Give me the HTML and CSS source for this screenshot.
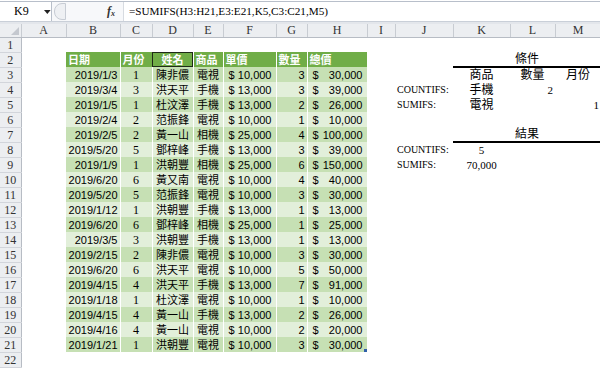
FILE: index.html
```html
<!DOCTYPE html>
<html lang="zh-Hant">
<head>
    <meta charset="UTF-8">
    <meta name="viewport" content="width=device-width, initial-scale=1.0">
    <title>SUMIFS</title>
    <link rel="stylesheet" href="styles.css">
</head>
<body>
    <div class="barra-formula">
        <div class="cuadro-nombre">
            <span class="ref">K9</span>
            <svg class="caret" width="7" height="4" viewBox="0 0 7 4"><path d="M0 0h7L3.5 4z" fill="#222"/></svg>
        </div>
        <div class="separador">
            <span class="perilla"></span>
            <span class="fx">f<sub>x</sub></span>
        </div>
        <div class="formula">=SUMIFS(H3:H21,E3:E21,K5,C3:C21,M5)</div>
    </div>
    <div class="franja"></div>

    <table class="hoja">
        <colgroup>
            <col style="width:21px"><col style="width:45px"><col style="width:54px"><col style="width:32px">
            <col style="width:41px"><col style="width:30px"><col style="width:53px"><col style="width:31px">
            <col style="width:60px"><col style="width:28px"><col style="width:58px"><col style="width:57px">
            <col style="width:45px"><col style="width:46px">
        </colgroup>
        <tr class="letras">
            <th class="esquina"></th>
            <th>A</th><th>B</th><th>C</th><th>D</th><th>E</th><th>F</th><th>G</th>
            <th>H</th><th>I</th><th>J</th><th>K</th><th>L</th><th>M</th>
        </tr>
        <tr><th class="num">1</th><td></td><td></td><td></td><td></td><td></td><td></td><td></td><td></td><td></td><td></td><td></td><td></td><td></td></tr>
        <tr class="cabecera">
            <th class="num">2</th><td></td>
            <td class="t">日期</td><td class="t">月份</td><td class="t c activa">姓名</td><td class="t">商品</td>
            <td class="t">單價</td><td class="t">數量</td><td class="t">總價</td>
            <td></td><td></td><td class="titulo" colspan="3">條件</td>
        </tr>
        <tr class="oscura">
            <th class="num">3</th><td></td>
            <td class="t r">2019/1/3</td><td class="t mes">1</td><td class="t c">陳非儂</td><td class="t c">電視</td>
            <td class="t dinero"><span class="dol">$</span>10,000</td><td class="t r">3</td><td class="t dinero"><span class="dol">$</span>30,000</td>
            <td></td><td></td><td class="cond">商品</td><td class="cond">數量</td><td class="cond">月份</td>
        </tr>
        <tr class="clara">
            <th class="num">4</th><td></td>
            <td class="t r">2019/3/4</td><td class="t mes">3</td><td class="t c">洪天平</td><td class="t c">手機</td>
            <td class="t dinero"><span class="dol">$</span>13,000</td><td class="t r">3</td><td class="t dinero"><span class="dol">$</span>39,000</td>
            <td></td><td class="lbl">COUNTIFS:</td><td class="cond">手機</td><td class="val r">2</td><td></td>
        </tr>
        <tr class="oscura">
            <th class="num">5</th><td></td>
            <td class="t r">2019/1/5</td><td class="t mes">1</td><td class="t c">杜汶澤</td><td class="t c">手機</td>
            <td class="t dinero"><span class="dol">$</span>13,000</td><td class="t r">2</td><td class="t dinero"><span class="dol">$</span>26,000</td>
            <td></td><td class="lbl">SUMIFS:</td><td class="cond">電視</td><td></td><td class="val r">1</td>
        </tr>
        <tr class="clara">
            <th class="num">6</th><td></td>
            <td class="t r">2019/2/4</td><td class="t mes">2</td><td class="t c">范振鋒</td><td class="t c">電視</td>
            <td class="t dinero"><span class="dol">$</span>10,000</td><td class="t r">1</td><td class="t dinero"><span class="dol">$</span>10,000</td>
            <td></td><td></td><td></td><td></td><td></td>
        </tr>
        <tr class="oscura">
            <th class="num">7</th><td></td>
            <td class="t r">2019/2/5</td><td class="t mes">2</td><td class="t c">黃一山</td><td class="t c">相機</td>
            <td class="t dinero"><span class="dol">$</span>25,000</td><td class="t r">4</td><td class="t dinero"><span class="dol">$</span>100,000</td>
            <td></td><td></td><td class="titulo" colspan="3">結果</td>
        </tr>
        <tr class="clara">
            <th class="num">8</th><td></td>
            <td class="t r">2019/5/20</td><td class="t mes">5</td><td class="t c">鄧梓峰</td><td class="t c">手機</td>
            <td class="t dinero"><span class="dol">$</span>13,000</td><td class="t r">3</td><td class="t dinero"><span class="dol">$</span>39,000</td>
            <td></td><td class="lbl">COUNTIFS:</td><td class="val c">5</td><td></td><td></td>
        </tr>
        <tr class="oscura">
            <th class="num">9</th><td></td>
            <td class="t r">2019/1/9</td><td class="t mes">1</td><td class="t c">洪朝豐</td><td class="t c">相機</td>
            <td class="t dinero"><span class="dol">$</span>25,000</td><td class="t r">6</td><td class="t dinero"><span class="dol">$</span>150,000</td>
            <td></td><td class="lbl">SUMIFS:</td><td class="val c">70,000</td><td></td><td></td>
        </tr>
        <tr class="clara">
            <th class="num">10</th><td></td>
            <td class="t r">2019/6/20</td><td class="t mes">6</td><td class="t c">黃又南</td><td class="t c">電視</td>
            <td class="t dinero"><span class="dol">$</span>10,000</td><td class="t r">4</td><td class="t dinero"><span class="dol">$</span>40,000</td>
            <td></td><td></td><td></td><td></td><td></td>
        </tr>
        <tr class="oscura">
            <th class="num">11</th><td></td>
            <td class="t r">2019/5/20</td><td class="t mes">5</td><td class="t c">范振鋒</td><td class="t c">電視</td>
            <td class="t dinero"><span class="dol">$</span>10,000</td><td class="t r">3</td><td class="t dinero"><span class="dol">$</span>30,000</td>
            <td></td><td></td><td></td><td></td><td></td>
        </tr>
        <tr class="clara">
            <th class="num">12</th><td></td>
            <td class="t r">2019/1/12</td><td class="t mes">1</td><td class="t c">洪朝豐</td><td class="t c">手機</td>
            <td class="t dinero"><span class="dol">$</span>13,000</td><td class="t r">1</td><td class="t dinero"><span class="dol">$</span>13,000</td>
            <td></td><td></td><td></td><td></td><td></td>
        </tr>
        <tr class="oscura">
            <th class="num">13</th><td></td>
            <td class="t r">2019/6/20</td><td class="t mes">6</td><td class="t c">鄧梓峰</td><td class="t c">相機</td>
            <td class="t dinero"><span class="dol">$</span>25,000</td><td class="t r">1</td><td class="t dinero"><span class="dol">$</span>25,000</td>
            <td></td><td></td><td></td><td></td><td></td>
        </tr>
        <tr class="clara">
            <th class="num">14</th><td></td>
            <td class="t r">2019/3/5</td><td class="t mes">3</td><td class="t c">洪朝豐</td><td class="t c">手機</td>
            <td class="t dinero"><span class="dol">$</span>13,000</td><td class="t r">1</td><td class="t dinero"><span class="dol">$</span>13,000</td>
            <td></td><td></td><td></td><td></td><td></td>
        </tr>
        <tr class="oscura">
            <th class="num">15</th><td></td>
            <td class="t r">2019/2/15</td><td class="t mes">2</td><td class="t c">陳非儂</td><td class="t c">電視</td>
            <td class="t dinero"><span class="dol">$</span>10,000</td><td class="t r">3</td><td class="t dinero"><span class="dol">$</span>30,000</td>
            <td></td><td></td><td></td><td></td><td></td>
        </tr>
        <tr class="clara">
            <th class="num">16</th><td></td>
            <td class="t r">2019/6/20</td><td class="t mes">6</td><td class="t c">洪天平</td><td class="t c">電視</td>
            <td class="t dinero"><span class="dol">$</span>10,000</td><td class="t r">5</td><td class="t dinero"><span class="dol">$</span>50,000</td>
            <td></td><td></td><td></td><td></td><td></td>
        </tr>
        <tr class="oscura">
            <th class="num">17</th><td></td>
            <td class="t r">2019/4/15</td><td class="t mes">4</td><td class="t c">洪天平</td><td class="t c">手機</td>
            <td class="t dinero"><span class="dol">$</span>13,000</td><td class="t r">7</td><td class="t dinero"><span class="dol">$</span>91,000</td>
            <td></td><td></td><td></td><td></td><td></td>
        </tr>
        <tr class="clara">
            <th class="num">18</th><td></td>
            <td class="t r">2019/1/18</td><td class="t mes">1</td><td class="t c">杜汶澤</td><td class="t c">電視</td>
            <td class="t dinero"><span class="dol">$</span>10,000</td><td class="t r">1</td><td class="t dinero"><span class="dol">$</span>10,000</td>
            <td></td><td></td><td></td><td></td><td></td>
        </tr>
        <tr class="oscura">
            <th class="num">19</th><td></td>
            <td class="t r">2019/4/15</td><td class="t mes">4</td><td class="t c">黃一山</td><td class="t c">手機</td>
            <td class="t dinero"><span class="dol">$</span>13,000</td><td class="t r">2</td><td class="t dinero"><span class="dol">$</span>26,000</td>
            <td></td><td></td><td></td><td></td><td></td>
        </tr>
        <tr class="clara">
            <th class="num">20</th><td></td>
            <td class="t r">2019/4/16</td><td class="t mes">4</td><td class="t c">黃一山</td><td class="t c">電視</td>
            <td class="t dinero"><span class="dol">$</span>10,000</td><td class="t r">2</td><td class="t dinero"><span class="dol">$</span>20,000</td>
            <td></td><td></td><td></td><td></td><td></td>
        </tr>
        <tr class="oscura">
            <th class="num">21</th><td></td>
            <td class="t r">2019/1/21</td><td class="t mes">1</td><td class="t c">洪朝豐</td><td class="t c">電視</td>
            <td class="t dinero"><span class="dol">$</span>10,000</td><td class="t r">3</td><td class="t dinero ultima"><span class="dol">$</span>30,000</td>
            <td></td><td></td><td></td><td></td><td></td>
        </tr>
        <tr><th class="num">22</th><td></td><td></td><td></td><td></td><td></td><td></td><td></td><td></td><td></td><td></td><td></td><td></td><td></td></tr>
    </table>
</body>
</html>
```

FILE: styles.css
```css
/* ---------------- pagina ---------------- */
body {
    margin: 0;
    width: 600px;
    height: 370px;
    overflow: hidden;
    background-color: #fff;
    font-family: "Liberation Serif", "Noto Sans CJK TC", serif;
    color: #000;
}

/* ---------------- barra de formulas ---------------- */
.barra-formula {
    display: flex;
    height: 19px;
    margin-top: 1px;
    border-top: 1px solid #b8bfca;
    border-bottom: 1px solid #c9cfd8;
    background-color: #fff;
}

.cuadro-nombre {
    display: flex;
    align-items: center;
    width: 51px;
    border-right: 1px solid #b8bfca;
    font-size: 12px;
}

.cuadro-nombre .ref {
    margin-left: 14px;
    width: 30px;
}

.caret {
    margin-left: 2px;
}

.separador {
    display: flex;
    align-items: center;
    width: 71px;
    background-color: #f7f8fa;
    border-right: 1px solid #d7dbe1;
}

.perilla {
    width: 10px;
    height: 15px;
    margin-left: 2px;
    border: 1px solid #c7ccd4;
    border-radius: 8px 0 0 8px;
    background-color: #eef0f3;
}

.fx {
    margin-left: auto;
    margin-right: 8px;
    font-style: italic;
    font-weight: bold;
    font-size: 12px;
    color: #333;
}

.fx sub {
    font-size: 8px;
    vertical-align: -1px;
}

.formula {
    padding-left: 5px;
    font-size: 11.2px;
    line-height: 19px;
}

.franja {
    height: 2px;
    background-color: #e3e6eb;
}

/* ---------------- hoja ---------------- */
.hoja {
    border-collapse: collapse;
    table-layout: fixed;
    width: 601px;
}

.hoja tr {
    height: 15px;
}

.hoja td {
    padding: 0 2px;
    overflow: hidden;
    white-space: nowrap;
    font-size: 11px;
    line-height: 14px;
}

.letras {
    height: 13px !important;
}

.letras th {
    background-color: #eceef1;
    border-right: 1px solid #c8ccd2;
    border-bottom: 1px solid #b7bcc4;
    font-weight: normal;
    font-size: 12px;
    line-height: 12px;
    color: #333;
    padding: 0;
}

.esquina {
    position: relative;
}

/* triangulito de seleccionar todo */
.esquina::after {
    content: "";
    position: absolute;
    right: 2px;
    bottom: 2px;
    border-left: 8px solid transparent;
    border-bottom: 8px solid #c4c8cf;
}

.num {
    background-color: #eceef1;
    border-right: 1px solid #b7bcc4;
    border-bottom: 1px solid #d2d5db;
    font-weight: normal;
    font-size: 12px;
    line-height: 14px;
    color: #333;
    padding: 0;
}

/* ---------------- tabla verde ---------------- */
.t {
    border-right: 1px solid #fff;
    font-family: "Liberation Sans", "Noto Sans CJK TC", sans-serif;
}

.cabecera .t {
    background-color: #70ad47;
    color: #fff;
    font-weight: bold;
}

.oscura .t {
    background-color: #c6e0b4;
}

.clara .t {
    background-color: #e2efda;
}

.activa {
    outline: 1px solid #1e2a17;
    outline-offset: -1px;
}

.r {
    text-align: right;
}

.c {
    text-align: center;
}

.mes {
    text-align: center;
    font-family: "Liberation Serif", serif;
    font-size: 12px !important;
}

.dinero {
    text-align: right;
    padding: 0 4px 0 5px !important;
}

.dol {
    float: left;
}

.ultima {
    position: relative;
}

/* asa de redimensionar la tabla */
.ultima::after {
    content: "";
    position: absolute;
    right: 0;
    bottom: 0;
    width: 3px;
    height: 3px;
    background-color: #2f5fa8;
}

/* ---------------- condiciones ---------------- */
.titulo {
    text-align: center;
    font-size: 12px !important;
    border-bottom: 2px solid #000;
}

.cond {
    text-align: center;
    font-size: 12px !important;
}

.lbl {
    font-size: 10px !important;
}

.val {
    font-size: 11px;
}
```
